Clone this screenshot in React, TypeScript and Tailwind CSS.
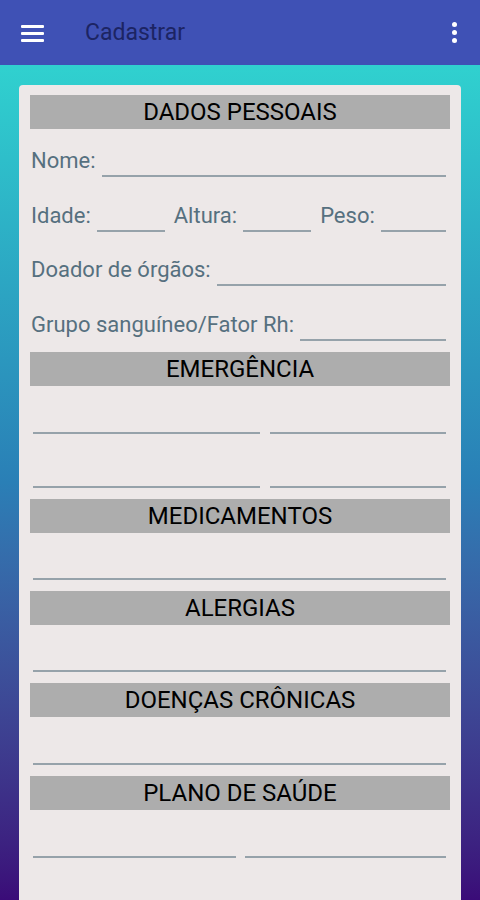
const Bar = ({ title }: { title: string }) => {
  return (
    <div className="h-[34px] bg-[#adadad] flex items-center justify-center text-[24px] leading-none text-black">
      {title}
    </div>
  );
};

const Line = ({ className }: { className: string }) => {
  return <div className={"h-[2px] bg-[#96a2aa] " + className} />;
};

const Label = ({ text }: { text: string }) => {
  return <span className="text-[22px] leading-[26px] text-[#56707f] whitespace-nowrap mb-[3px] ml-[1px]">{text}</span>;
};

const App = () => {
  return (
    <div className="w-[480px] h-[900px] overflow-hidden font-['Roboto',sans-serif]">
      <div className="h-[65px] bg-[#3f51b5] flex items-center px-[21px]">
        <svg width="24" height="20" viewBox="0 0 24 20" className="mt-[1px]">
          <rect x="0" y="2" width="23" height="3" rx="1" fill="#fff" />
          <rect x="0" y="9" width="23" height="3" rx="1" fill="#fff" />
          <rect x="0" y="16" width="23" height="3" rx="1" fill="#fff" />
        </svg>
        <span className="ml-[40px] mt-[2px] text-[23px] text-[#1c2463]">Cadastrar</span>
        <div className="ml-auto mr-[2px] flex flex-col gap-[3px]">
          <div className="w-[5px] h-[5px] rounded-full bg-white" />
          <div className="w-[5px] h-[5px] rounded-full bg-white" />
          <div className="w-[5px] h-[5px] rounded-full bg-white" />
        </div>
      </div>
      <div className="h-[835px] bg-gradient-to-b from-[#30d1cf] via-[#2a7fb6] to-[#3a0b78] px-[19px] pt-[20px]">
        <div className="bg-[#ede8e8] rounded-[4px] px-[11px] pt-[10px] h-[900px]">
          <Bar title="DADOS PESSOAIS" />
          <div className="h-[48px] flex items-end">
            <Label text="Nome:" />
            <Line className="flex-1 ml-[6px] mr-[4px]" />
          </div>
          <div className="h-[54.5px] flex items-end">
            <Label text="Idade:" />
            <Line className="w-[68px] ml-[6px] mr-[8px]" />
            <Label text="Altura:" />
            <Line className="w-[68px] ml-[6px] mr-[8px]" />
            <Label text="Peso:" />
            <Line className="flex-1 ml-[6px] mr-[4px]" />
          </div>
          <div className="h-[54.5px] flex items-end">
            <Label text="Doador de órgãos:" />
            <Line className="flex-1 ml-[6px] mr-[4px]" />
          </div>
          <div className="h-[54.5px] flex items-end">
            <Label text="Grupo sanguíneo/Fator Rh:" />
            <Line className="flex-1 ml-[6px] mr-[4px]" />
          </div>
          <div className="h-[11px]" />

          <Bar title="EMERGÊNCIA" />
          <div className="h-[48px] flex items-end">
            <Line className="w-[227px] ml-[3px]" />
            <Line className="flex-1 ml-[10px] mr-[4px]" />
          </div>
          <div className="h-[54.5px] flex items-end">
            <Line className="w-[227px] ml-[3px]" />
            <Line className="flex-1 ml-[10px] mr-[4px]" />
          </div>
          <div className="h-[11px]" />

          <Bar title="MEDICAMENTOS" />
          <div className="h-[47px] flex items-end">
            <Line className="flex-1 ml-[3px] mr-[4px]" />
          </div>
          <div className="h-[11px]" />

          <Bar title="ALERGIAS" />
          <div className="h-[47px] flex items-end">
            <Line className="flex-1 ml-[3px] mr-[4px]" />
          </div>
          <div className="h-[11px]" />

          <Bar title="DOENÇAS CRÔNICAS" />
          <div className="h-[48px] flex items-end">
            <Line className="flex-1 ml-[3px] mr-[4px]" />
          </div>
          <div className="h-[11px]" />

          <Bar title="PLANO DE SAÚDE" />
          <div className="h-[48px] flex items-end">
            <Line className="w-[203px] ml-[3px]" />
            <Line className="flex-1 ml-[9px] mr-[4px]" />
          </div>
        </div>
      </div>
    </div>
  );
};

export default App;
